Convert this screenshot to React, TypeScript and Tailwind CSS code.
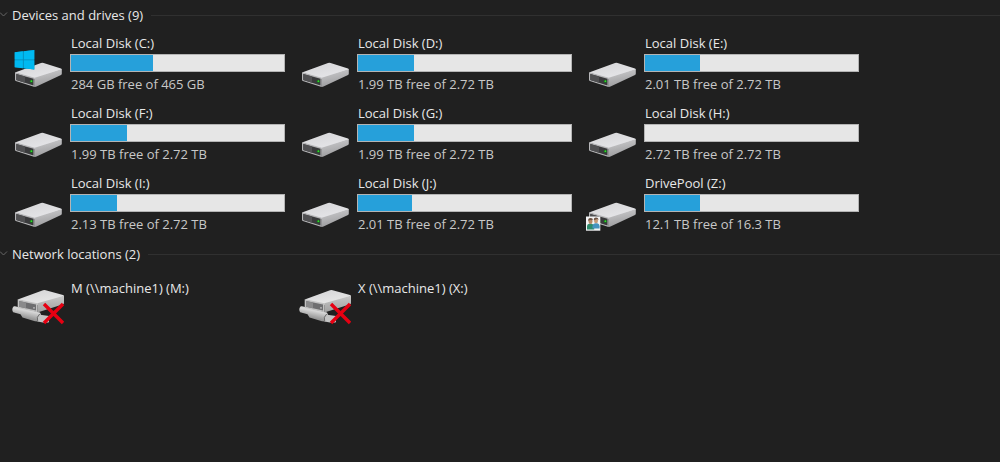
import { useId, useState, type ReactNode } from "react";

type Overlay = "windows" | "shared";

interface Drive {
  name: string;
  space: string;
  used: number;
  overlay?: Overlay;
}

const drives: Drive[] = [
  { name: "Local Disk (C:)", space: "284 GB free of 465 GB", used: 38.5, overlay: "windows" },
  { name: "Local Disk (D:)", space: "1.99 TB free of 2.72 TB", used: 26.5 },
  { name: "Local Disk (E:)", space: "2.01 TB free of 2.72 TB", used: 25.7 },
  { name: "Local Disk (F:)", space: "1.99 TB free of 2.72 TB", used: 26.5 },
  { name: "Local Disk (G:)", space: "1.99 TB free of 2.72 TB", used: 26.5 },
  { name: "Local Disk (H:)", space: "2.72 TB free of 2.72 TB", used: 0 },
  { name: "Local Disk (I:)", space: "2.13 TB free of 2.72 TB", used: 21.6 },
  { name: "Local Disk (J:)", space: "2.01 TB free of 2.72 TB", used: 25.5 },
  { name: "DrivePool (Z:)", space: "12.1 TB free of 16.3 TB", used: 25.7, overlay: "shared" },
];

const locations = ["M (\\\\machine1) (M:)", "X (\\\\machine1) (X:)"];

function DriveIcon({ overlay }: { overlay?: Overlay }) {
  const id = useId();
  return (
    <svg viewBox="0 0 52 44" className="mt-[13px] h-11 w-[52px] shrink-0" aria-hidden="true">
      <defs>
        <linearGradient id={id + "t"} x1="0" y1="0" x2="0.6" y2="1">
          <stop offset="0" stopColor="#d4d4d6" />
          <stop offset="1" stopColor="#e6e6e9" />
        </linearGradient>
        <linearGradient id={id + "s"} x1="0" y1="0" x2="0.3" y2="1">
          <stop offset="0" stopColor="#cfcfd1" />
          <stop offset="1" stopColor="#9c9c9e" />
        </linearGradient>
      </defs>
      <path d="M3 24.5 29 15q1.300-.5 2.600 0L49 20.500q.8.300.8 1.300L22.700 31z" fill={`url(#${id}t)`} />
      <path d="M22.700 29.700 49.800 21.300v4.400q0 .8-.8 1.200L24.500 38.500q-1 .5-1.800.4z" fill={`url(#${id}s)`} />
      <path d="M3 24.300 22.700 29.700V39L3.800 33Q3 32.700 3 31.800z" fill="#b6b6b8" />
      <path d="M4.300 26 21.500 30.800v6.700L4.300 31.900z" fill="#3a3a3c" />
      <path d="M4.300 26 13 28.400v6.300l-8.700-2.800z" fill="#505052" />
      <circle cx="19.400" cy="33.200" r="1.500" fill="#176b1c" />
      <circle cx="19.400" cy="33.200" r=".9" fill="#35d52f" />
      {overlay === "windows" && (
        <g>
          <path d="M2.700 4.300 22.300 2v19.500L2.700 19.300z" fill="#0788b5" />
          <path d="M2.700 4.300 10.900 3.300v8.200H2.700zM11.700 3.200 22.300 2v9.500H11.700zM2.700 12.300h8.200v8l-8.200-1zM11.700 12.300h10.600v9.200l-10.600-1.200z" fill="#00b9f1" />
        </g>
      )}
      {overlay === "shared" && (
        <g>
          <path d="M0 28.500h14.300v14.200H0z" fill="#f3f4f5" />
          <path d="M1 41.500v-3.200Q1 36.100 3.200 35.700h2.500q2.500.4 2.500 3v2.800z" fill="#2f8b6c" />
          <path d="M6.500 40.500v-2.300q0-2.500 2.500-3h2.200q2.400.4 2.400 2.800v2.500z" fill="#4593bf" />
          <ellipse cx="4.500" cy="33.500" rx="2" ry="2.600" fill="#b98a68" />
          <ellipse cx="10" cy="32.700" rx="2" ry="2.600" fill="#c69a78" />
          <path d="M2.200 33q-.4-2.800 2.300-2.900 2.700.1 2.200 2.200l-2.700-.4zM7.800 32.200q-.2-2.700 2.200-2.800 2.800.1 2.300 2.900l-1-1.200z" fill="#6b5142" />
        </g>
      )}
    </svg>
  );
}

function NetworkDriveIcon() {
  const id = useId();
  return (
    <svg viewBox="0 0 52 44" className="mt-px h-11 w-[52px] shrink-0" aria-hidden="true">
      <defs>
        <linearGradient id={id + "t"} x1="0" y1="0" x2="0.5" y2="1">
          <stop offset="0" stopColor="#d2d2d4" />
          <stop offset="1" stopColor="#e8e8e8" />
        </linearGradient>
        <linearGradient id={id + "s"} x1="0" y1="0" x2="0" y2="1">
          <stop offset="0" stopColor="#c8c8c8" />
          <stop offset="1" stopColor="#a0a0a0" />
        </linearGradient>
        <linearGradient id={id + "p"} gradientUnits="userSpaceOnUse" x1="16" y1="27" x2="14" y2="37">
          <stop offset="0.300" stopColor="#d6d6d6" />
          <stop offset="1" stopColor="#969696" />
        </linearGradient>
      </defs>
      <path d="M1.500 25.500Q2 25 3 25.300L6 26 28 31.500q2.500 4-1.500 9L23 40.300 10.500 36.500 8.500 33.200 1.200 31.300Q-.8 28 1.500 25.500z" fill={`url(#${id}p)`} />
      <path d="M26.500 33.500 37 35v6.300L33.500 42l-8-1.500z" fill="#c4c4c4" />
      <path d="M27.700 33q-3.700 3-2 7.200" fill="none" stroke="#6b6b6b" strokeWidth="1" />
      <path d="M5.700 18.500 31 9.300q1.300-.5 2.700-.1L51 14q1 .3 1 1.300L25.300 24z" fill={`url(#${id}t)`} />
      <path d="M25.300 22.300 52 14.700V22q0 .8-.8 1.200L27 31q-1 .4-1.700.3z" fill={`url(#${id}s)`} />
      <path d="M5.700 18.300 25.300 22.300v9L6.400 27q-.7-.2-.7-1z" fill="#c2c2c2" />
      <path d="M7 19.900 24 23.500v6L7 25.700z" fill="#6e6e70" />
      <path d="M7 19.900 14 21.400v5.900l-7-1.600z" fill="#8a8a8b" />
      <circle cx="22" cy="26.900" r=".8" fill="#c8c8c8" />
      <path d="M32 23 51 42M51 23 32 42" stroke="#e60012" strokeWidth="3.400" />
    </svg>
  );
}

function Group({ title, children }: { title: string; children: ReactNode }) {
  const [open, setOpen] = useState(true);
  return (
    <section>
      <h2 className="flex h-[30px] items-center">
        <button
          type="button"
          aria-expanded={open}
          onClick={() => setOpen(!open)}
          className="flex items-center gap-1"
        >
          <svg viewBox="0 0 8 8" className="size-2" aria-hidden="true">
            <path d="M0 1.500 3.500 5 7 1.500" fill="none" stroke="#666" strokeWidth="1" />
          </svg>
          <span className="leading-4 whitespace-nowrap text-[#e8e8e8]">{title}</span>
        </button>
        <span className="ml-2 h-px flex-1 bg-[#303030]" />
      </h2>
      {open && children}
    </section>
  );
}

export default function App() {
  return (
    <main className="min-h-screen bg-[#202020] font-['Open_Sans','Noto_Sans',sans-serif] text-[13px] text-[#e8e8e8]">
      <Group title="Devices and drives (9)">
        <ul className="grid grid-cols-[repeat(auto-fill,273px)] gap-x-[14px] gap-y-3 pt-[5px] pb-1.5 pl-3">
          {drives.map((drive) => (
            <li key={drive.name} className="flex h-[58px] gap-1.5">
              <DriveIcon overlay={drive.overlay} />
              <div className="min-w-0 flex-1">
                <p className="pl-px leading-4">{drive.name}</p>
                <div
                  role="meter"
                  aria-label={`${drive.name} used space`}
                  aria-valuemin={0}
                  aria-valuemax={100}
                  aria-valuenow={drive.used}
                  className="mt-[3px] mb-1 h-[18px] border border-[#b4b4b4] bg-[#e6e6e6]"
                >
                  <div className="h-full bg-[#26a0da]" style={{ width: `${drive.used}%` }} />
                </div>
                <p className="pl-px leading-4 text-[#c8c8c8]">{drive.space}</p>
              </div>
            </li>
          ))}
        </ul>
      </Group>
      <Group title="Network locations (2)">
        <ul className="grid grid-cols-[repeat(auto-fill,273px)] gap-x-[14px] gap-y-3 pt-[11px] pl-3">
          {locations.map((name) => (
            <li key={name} className="flex gap-1.5">
              <NetworkDriveIcon />
              <p className="pl-px leading-4">{name}</p>
            </li>
          ))}
        </ul>
      </Group>
    </main>
  );
}
